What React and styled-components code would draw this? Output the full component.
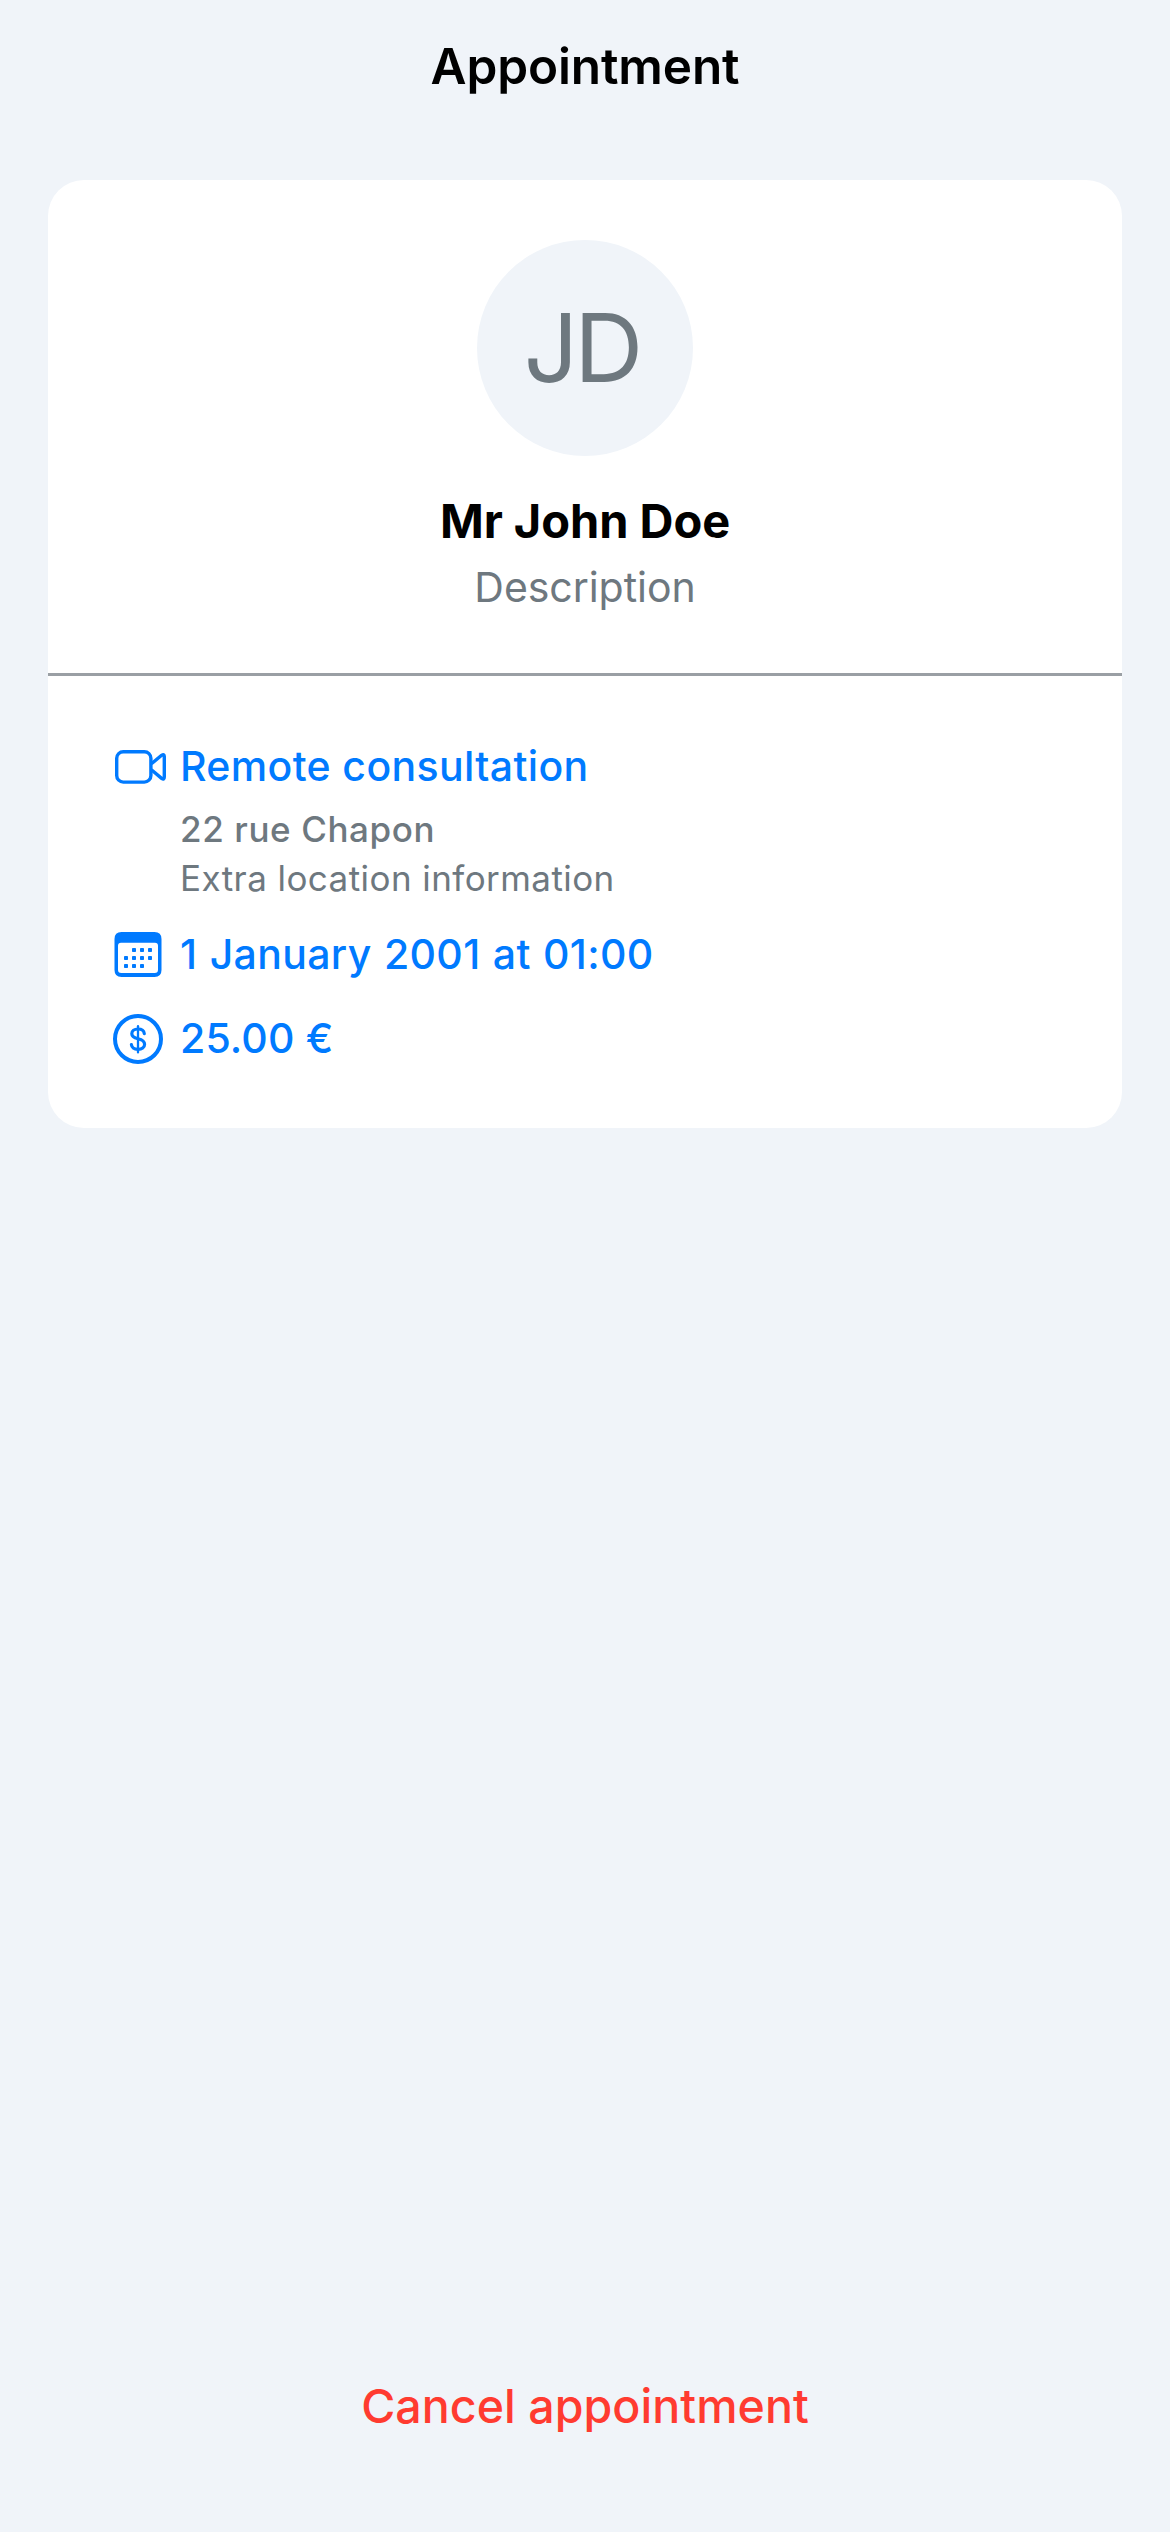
import React from "react";
import styled, { createGlobalStyle } from "styled-components";

const colors = {
  page: "#f0f4f9",
  card: "#ffffff",
  ink: "#000000",
  muted: "#6e787f",
  rule: "#9a9fa4",
  accent: "#007aff",
  danger: "#ff3b30",
};

const GlobalStyle = createGlobalStyle`
  * { box-sizing: border-box; }
  body {
    margin: 0;
    background: ${colors.page};
    color: ${colors.ink};
    font-family: Inter, "Liberation Sans", sans-serif;
    -webkit-font-smoothing: antialiased;
  }
`;

const Screen = styled.div`
  display: flex;
  flex-direction: column;
  width: 1170px;
  height: 2532px;
  padding-bottom: 96px;
  overflow: hidden;
  background: ${colors.page};
`;

const Header = styled.header`
  display: flex;
  align-items: center;
  justify-content: center;
  height: 132px;
`;

const Title = styled.h1`
  margin: 0;
  font-size: 49.5px;
  font-weight: 600;
  letter-spacing: -0.12px;
`;

const Card = styled.main`
  margin: 48px 48px 0;
  background: ${colors.card};
  border-radius: 36px;
`;

const Profile = styled.section`
  display: flex;
  flex-direction: column;
  align-items: center;
  height: 496px;
  padding-top: 60px;
  border-bottom: 3px solid ${colors.rule};
`;

const Avatar = styled.div`
  width: 216px;
  height: 216px;
  padding-right: 7px;
  border-radius: 50%;
  background: ${colors.page};
  color: ${colors.muted};
  font-size: 95.5px;
  line-height: 215px;
  letter-spacing: -4px;
  text-align: center;
`;

const Name = styled.h2`
  margin: 35px 0 0;
  font-size: 47px;
  font-weight: 700;
  line-height: 60px;
  letter-spacing: -0.05px;
`;

const Subtitle = styled.p`
  margin: 11px 0 0;
  color: ${colors.muted};
  font-size: 41px;
  line-height: 50px;
  letter-spacing: -0.05px;
`;

const Details = styled.section`
  padding: 65px 62px;
`;

const Row = styled.div`
  display: grid;
  grid-template-columns: 56px 1fr;
  column-gap: 14px;
  margin-top: ${(p) => p.$gap || 0}px;
  color: ${colors.accent};
`;

const Icon = styled.svg`
  display: block;
  width: 56px;
  height: 50px;
  overflow: visible;
  fill: none;
  stroke: currentColor;
  stroke-linecap: round;
  stroke-linejoin: round;
`;

const Label = styled.div`
  font-size: 41px;
  font-weight: 500;
  line-height: 50px;
  letter-spacing: ${(p) => p.$tracking || 0}px;
  word-spacing: ${(p) => p.$wordGap || 0}px;
  white-space: nowrap;
`;

const Address = styled.address`
  padding: 16px 0 0 70px;
  color: ${colors.muted};
  font-size: 35px;
  font-style: normal;
  line-height: 44px;
`;

const Street = styled.div`
  font-weight: 500;
  letter-spacing: 0.6px;
`;

const Extra = styled.div`
  margin-top: 5px;
  letter-spacing: 0.43px;
`;

const CancelButton = styled.button`
  align-self: center;
  margin-top: auto;
  padding: 0;
  border: 0;
  background: none;
  color: ${colors.danger};
  font: 500 46.5px/60px Inter, "Liberation Sans", sans-serif;
  letter-spacing: 0.06px;
`;

const VideoIcon = () => (
  <Icon viewBox="0 0 56 50" strokeWidth="3.4">
    <rect x="6.7" y="10.7" width="34.2" height="30.4" rx="6.6" />
    <path d="M42 22.3 L51.6 14.3 Q54.3 12.4 54.3 15.6 V36 Q54.3 39.2 51.6 37.4 L42 29.3" />
  </Icon>
);

const DOTS = [
  [24, 21], [32, 21], [40, 21],
  [16, 29], [24, 29], [32, 29], [40, 29],
  [16, 37], [24, 37], [32, 37],
];

const CalendarIcon = () => (
  <Icon viewBox="0 0 56 50">
    <path
      fill="currentColor"
      stroke="none"
      fillRule="evenodd"
      d="M11.5 3 H44.5 Q51.5 3 51.5 10 V41 Q51.5 48 44.5 48 H11.5 Q4.5 48 4.5 41 V10 Q4.5 3 11.5 3 Z
         M11 13.7 Q8 13.7 8 16.7 V40.7 Q8 44 11.3 44 H44.7 Q48 44 48 40.7 V16.7 Q48 13.7 45 13.7 Z"
    />
    {DOTS.map(([x, y]) => (
      <rect key={`${x}-${y}`} x={x - 2} y={y - 2} width="4" height="4" rx="0.8" fill="currentColor" stroke="none" />
    ))}
  </Icon>
);

const DollarIcon = () => (
  <Icon viewBox="0 0 56 50">
    <circle cx="28" cy="26" r="23" strokeWidth="4" />
    <path
      strokeWidth="3.2"
      d="M34.3 20.6 C33.9 17.6 31.6 16 28 16 C24.3 16 21.8 17.9 21.8 20.7 C21.8 23.5 23.9 24.8 28 25.8 C32.3 26.8 34.6 28.2 34.6 31.3 C34.6 34.4 31.9 36.3 28 36.3 C24.1 36.3 21.8 34.5 21.4 31.6"
    />
    <path strokeWidth="2.3" d="M28 13.2 V39.4" />
  </Icon>
);

export default function App() {
  return (
    <>
      <GlobalStyle />
      <Screen>
        <Header>
          <Title>Appointment</Title>
        </Header>
        <Card>
          <Profile>
            <Avatar>JD</Avatar>
            <Name>Mr John Doe</Name>
            <Subtitle>Description</Subtitle>
          </Profile>
          <Details>
            <Row>
              <VideoIcon />
              <Label $tracking={0.36}>Remote consultation</Label>
            </Row>
            <Address>
              <Street>22 rue Chapon</Street>
              <Extra>Extra location information</Extra>
            </Address>
            <Row $gap={29}>
              <CalendarIcon />
              <Label $tracking={0.35} $wordGap={1}>1 January 2001 at 01:00</Label>
            </Row>
            <Row $gap={34}>
              <DollarIcon />
              <Label $tracking={0.15}>25.00 €</Label>
            </Row>
          </Details>
        </Card>
        <CancelButton type="button">Cancel appointment</CancelButton>
      </Screen>
    </>
  );
}
